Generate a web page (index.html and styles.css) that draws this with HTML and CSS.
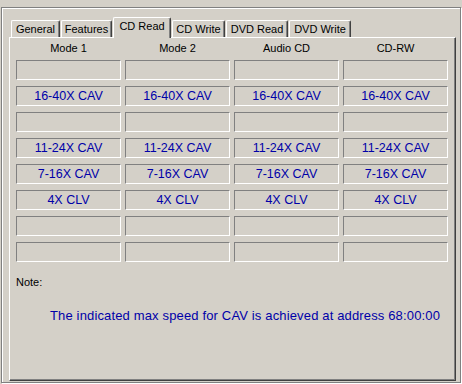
FILE: index.html
```html
<!DOCTYPE html>
<html>
<head>
<meta charset="utf-8">
<link rel="stylesheet" href="styles.css">
</head>
<body>
<div class="frame">
  <div class="tabs">
    <div class="tab w-general">General</div>
    <div class="tab w-features">Features</div>
    <div class="tab active w-cdread">CD Read</div>
    <div class="tab w-cdwrite">CD Write</div>
    <div class="tab w-dvdread">DVD Read</div>
    <div class="tab w-dvdwrite">DVD Write</div>
  </div>
  <div class="panel">
    <div class="heads">
      <div class="hd">Mode 1</div>
      <div class="hd">Mode 2</div>
      <div class="hd">Audio CD</div>
      <div class="hd">CD-RW</div>
    </div>
    <div class="grid">
      <div class="box"></div><div class="box"></div><div class="box"></div><div class="box"></div>
      <div class="box">16-40X CAV</div><div class="box">16-40X CAV</div><div class="box">16-40X CAV</div><div class="box">16-40X CAV</div>
      <div class="box"></div><div class="box"></div><div class="box"></div><div class="box"></div>
      <div class="box">11-24X CAV</div><div class="box">11-24X CAV</div><div class="box">11-24X CAV</div><div class="box">11-24X CAV</div>
      <div class="box">7-16X CAV</div><div class="box">7-16X CAV</div><div class="box">7-16X CAV</div><div class="box">7-16X CAV</div>
      <div class="box">4X CLV</div><div class="box">4X CLV</div><div class="box">4X CLV</div><div class="box">4X CLV</div>
      <div class="box"></div><div class="box"></div><div class="box"></div><div class="box"></div>
      <div class="box"></div><div class="box"></div><div class="box"></div><div class="box"></div>
    </div>
    <div class="note">Note:</div>
    <div class="msg">The indicated max speed for CAV is achieved at address 68:00:00</div>
  </div>
</div>
</body>
</html>
```

FILE: styles.css
```css
html, body {
  margin: 0;
  padding: 0;
  background: #d4d0c8;
}
body {
  width: 462px;
  height: 384px;
  overflow: hidden;
  font-family: "Liberation Sans", Arial, sans-serif;
  font-size: 11px;
  color: #000;
}
.frame {
  box-sizing: border-box;
  margin: 7px 0 0 1px;
  width: 460px;
  height: 376px;
  border: 1px solid #808080;
  box-shadow: inset 1px 1px 0 #fff, 1px 1px 0 #fff;
  padding: 9px 4px 1px 7px;
  display: flex;
  flex-direction: column;
}
.tabs {
  display: flex;
  align-items: flex-end;
  height: 20px;
  padding-left: 2px;
  gap: 1px;
  position: relative;
  z-index: 2;
}
.tab {
  box-sizing: border-box;
  height: 17px;
  border-top: 1px solid #fff;
  border-left: 1px solid #fff;
  border-right: 1px solid #404040;
  border-top-left-radius: 2px;
  border-top-right-radius: 2px;
  box-shadow: inset -1px 0 0 #808080;
  background: #d4d0c8;
  text-align: center;
  line-height: 16px;
  white-space: nowrap;
}
.tab.active {
  height: 21px;
  margin-bottom: -1px;
  line-height: 17px;
}
.w-general { width: 49px; }
.w-features { width: 51px; }
.w-cdread { width: 58px; }
.w-cdwrite { width: 53px; }
.w-dvdread { width: 62px; }
.w-dvdwrite { width: 62px; }
.panel {
  box-sizing: border-box;
  flex: 1;
  border-top: 1px solid #fff;
  border-left: 1px solid #fff;
  border-right: 1px solid #404040;
  border-bottom: 1px solid #404040;
  box-shadow: inset -1px -1px 0 #808080;
  padding: 0 0 0 6px;
}
.heads {
  display: grid;
  grid-template-columns: repeat(4, 105px);
  column-gap: 4px;
  height: 22px;
  box-sizing: border-box;
  padding-top: 4px;
}
.hd {
  text-align: center;
  line-height: 13px;
}
.grid {
  display: grid;
  grid-template-columns: repeat(4, 105px);
  grid-auto-rows: 20px;
  column-gap: 4px;
  row-gap: 6px;
}
.box {
  box-sizing: border-box;
  border-top: 1px solid #808080;
  border-left: 1px solid #808080;
  border-right: 1px solid #fff;
  border-bottom: 1px solid #fff;
  text-align: center;
  font-size: 12.5px;
  line-height: 18px;
  color: #0000a8;
  white-space: nowrap;
}
.note {
  margin-top: 14px;
  line-height: 13px;
}
.msg {
  margin-top: 19px;
  padding-left: 34px;
  font-size: 13px;
  letter-spacing: 0.15px;
  line-height: 15px;
  color: #0000a8;
  white-space: nowrap;
}
```
